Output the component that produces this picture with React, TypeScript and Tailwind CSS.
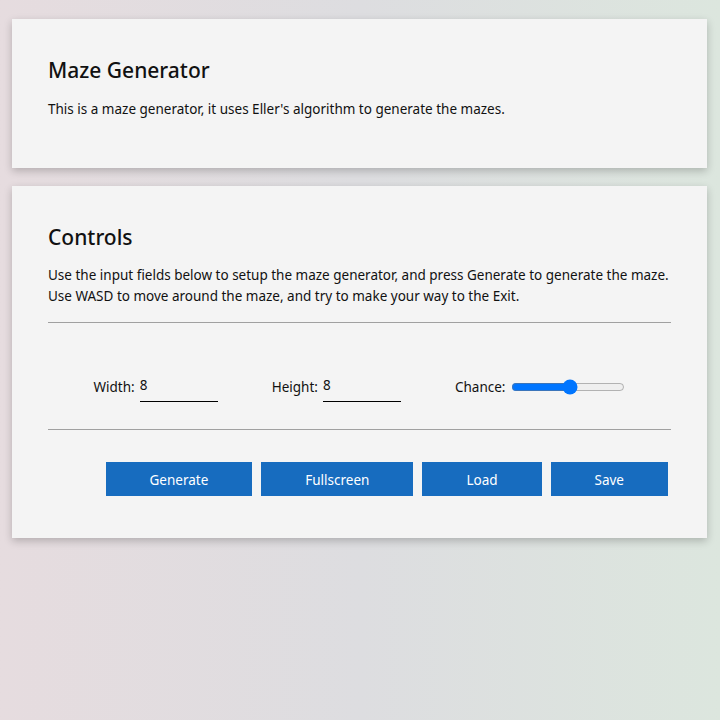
import React from 'react';

const font = { fontFamily: '"Noto Sans", "Open Sans", sans-serif' };

const Field = ({ label, value }: { label: string; value: string }) => (
    <div className="flex items-center gap-[5px]">
        <label className="text-[13.5px] text-[#111]">{label}</label>
        <input
            type="text"
            defaultValue={value}
            className="w-[78px] h-[30px] pb-[4px] border-b border-black bg-transparent text-[13.5px] text-[#111] outline-none"
        />
    </div>
);

const App = () => {
    const buttons = ['Generate', 'Fullscreen', 'Load', 'Save'];

    return (
        <div className="min-h-screen w-full bg-gradient-to-r from-[#e6dcdf] via-[#dddde0] to-[#dce6de] pt-[19px] pb-6" style={font}>
            {/* intro card */}
            <div className="ml-3 w-[695px] bg-[#f4f4f4] shadow-[0_3px_8px_rgba(0,0,0,0.22)] px-9 pt-[35px] pb-[49px]">
                <h1 className="text-[21px] leading-[32px] font-medium text-[#111]">Maze Generator</h1>
                <p className="mt-[13px] text-[13.5px] leading-[20px] text-[#111]">
                    This is a maze generator, it uses Eller's algorithm to generate the mazes.
                </p>
            </div>

            {/* controls card */}
            <div className="ml-3 mt-[18px] w-[695px] bg-[#f4f4f4] shadow-[0_3px_8px_rgba(0,0,0,0.22)] px-9 pt-[35px] pb-[42px]">
                <h2 className="text-[21px] leading-[32px] font-medium text-[#111]">Controls</h2>
                <p className="mt-[12px] text-[13.5px] leading-[21px] text-[#111]">
                    Use the input fields below to setup the maze generator, and press Generate to generate the maze.
                    <br />
                    Use WASD to move around the maze, and try to make your way to the Exit.
                </p>
                <hr className="mt-[15px] border-0 border-t border-[#a0a0a0]" />

                <div className="mt-[49px] flex items-center justify-center gap-[54px]">
                    <Field label="Width:" value="8" />
                    <Field label="Height:" value="8" />
                    <div className="flex items-center gap-[6px]">
                        <label className="text-[13.5px] text-[#111]">Chance:</label>
                        <input type="range" min={0} max={100} defaultValue={52} className="w-[114px] accent-[#0075ff]" />
                    </div>
                </div>

                <hr className="mt-[27px] border-0 border-t border-[#a0a0a0]" />

                <div className="mt-[32px] flex justify-end gap-[9px] pr-[3px]">
                    {buttons.map((b) => (
                        <button key={b} className="h-[34px] pt-[2px] px-[44px] bg-[#176cbf] text-white text-[13.5px]">
                            {b}
                        </button>
                    ))}
                </div>
            </div>
        </div>
    );
};

export default App;
